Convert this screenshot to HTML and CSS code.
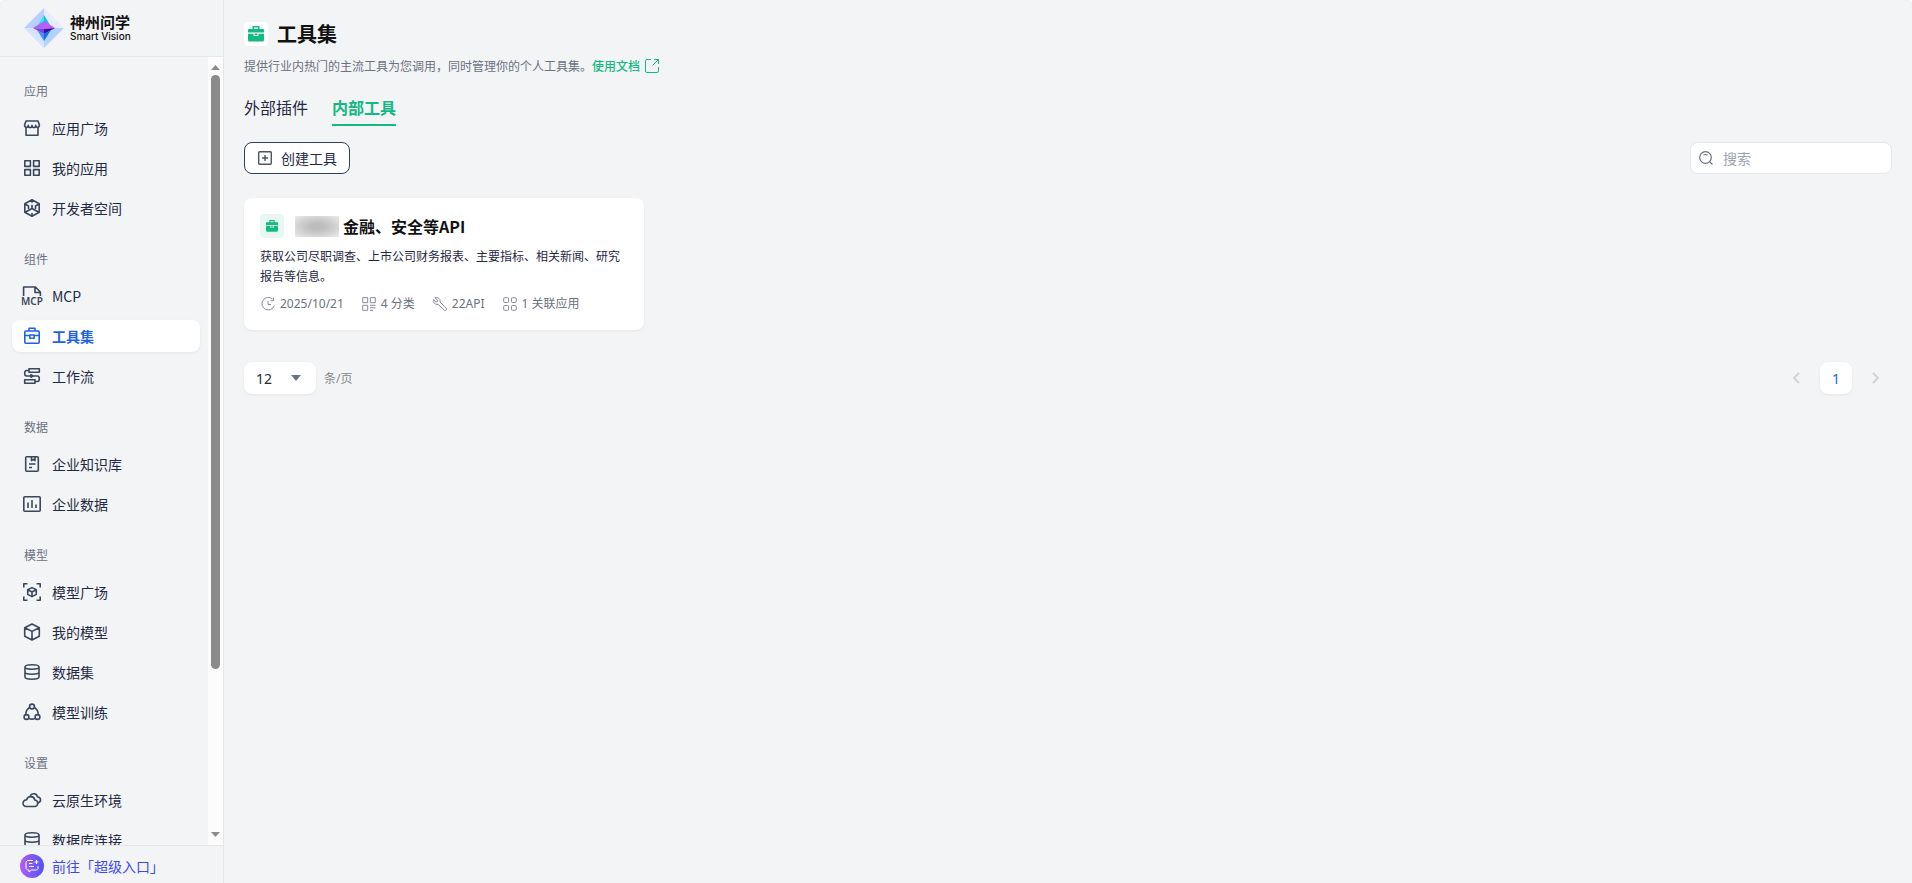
FILE: index.html
```html
<!DOCTYPE html>
<html lang="zh-CN">

<head>
    <meta charset="UTF-8">
    <meta name="viewport" content="width=device-width, initial-scale=1.0">
    <title>工具集</title>
    <link rel="stylesheet" href="styles.css">
</head>

<body>

    <div class="layout">
        <aside class="sidebar">
            <header class="brand">
                <svg class="brand-logo" viewBox="0 0 40 40">
                    <path d="M20 0L40 20H20z" fill="#e6edff" />
                    <path d="M20 0L0 20h20z" fill="#b9cfff" />
                    <path d="M0 20l20 20V20z" fill="#d5e4ff" />
                    <path d="M40 20L20 40V20z" fill="#b4d2ff" />
                    <path d="M20 7l-6 10 6-3z" fill="#35e6f5" />
                    <path d="M20 7l6 10-6-3z" fill="#18b9f2" />
                    <path d="M9 20l11-7v8z" fill="#a766f5" />
                    <path d="M31 20l-11-7v8z" fill="#c15cf4" />
                    <path d="M9 20l11 1v5z" fill="#7b3fe4" />
                    <path d="M31 20l-11 1v5z" fill="#35149c" />
                    <path d="M13 22l7 11v-7z" fill="#4b8dfa" />
                    <path d="M27 22l-7 11v-7z" fill="#0a71ea" />
                </svg>
                <div class="brand-text">
                    <strong>神州问学</strong>
                    <span>Smart Vision</span>
                </div>
            </header>

            <div class="sidebar-body">
                <nav class="menu">
                    <section>
                        <h2>应用</h2>
                        <a href="#">
                            <svg viewBox="0 0 20 20"><path d="M4 9v8.200h12V9M4 3h12l1.400 4c0 3-3.600 3-3.700.4 0 2.800-3.700 2.800-3.700 0 0 2.800-3.700 2.800-3.700 0C6.200 10 2.600 10 2.600 7z" /></svg>
                            应用广场
                        </a>
                        <a href="#">
                            <svg viewBox="0 0 20 20"><path d="M2.800 2.800h5.600v5.600H2.800zM11.600 2.800h5.600v5.600h-5.600zM2.800 11.600h5.600v5.600H2.800zM11.600 11.600h5.600v5.600h-5.600z" /></svg>
                            我的应用
                        </a>
                        <a href="#">
                            <svg viewBox="0 0 20 20"><path d="M10 1.800l7.200 4v8.400l-7.200 4-7.200-4V5.800zM10 2v2.800M10 10.500V6.800M10 10.500l-6.800 3.800M10 10.500l6.800 3.800M10 18v-3M3 6l3.500 2v3M17 6l-3.500 2v3" /></svg>
                            开发者空间
                        </a>
                    </section>
                    <section>
                        <h2>组件</h2>
                        <a href="#">
                            <svg class="mcp-icon" viewBox="0 0 22 20">
                                <path d="M2.600 10V1h11.800l5 5v4M14 1v5.500h5.500" />
                                <text x="11" y="19" text-anchor="middle">MCP</text>
                            </svg>
                            <span class="latin">MCP</span>
                        </a>
                        <a href="#" class="active">
                            <svg viewBox="0 0 20 20"><rect x="2.800" y="5" width="14.400" height="12.200" rx="1" /><path d="M7 5V2.300h6V5M2.700 9.500h5.100M12.200 9.500h5.100M7.800 9v3.200h4.400V9z" /></svg>
                            工具集
                        </a>
                        <a href="#">
                            <svg viewBox="0 0 20 20"><path d="M7 2.700h10.300v3.600H7zM2.700 13.700H13v3.600H2.700zM7 4.500H4.500c-2.400 0-2.400 5.500 0 5.500h11c2.400 0 2.400 5.500 0 5.500H13M9 8.700v2.600l2-1.300z" /></svg>
                            工作流
                        </a>
                    </section>
                    <section>
                        <h2>数据</h2>
                        <a href="#">
                            <svg viewBox="0 0 20 20"><rect x="3.700" y="2.700" width="12.600" height="14.600" rx="1" /><path d="M9.500 3v3.600l1.800-1.200L13 6.600V3M7 10h6.500M7 13.500h3" /></svg>
                            企业知识库
                        </a>
                        <a href="#">
                            <svg viewBox="0 0 20 20"><rect x="1.800" y="2.800" width="16.400" height="14.400" rx="1" /><path d="M6 8.500V14M10 6v8M14 10.500V14" /></svg>
                            企业数据
                        </a>
                    </section>
                    <section>
                        <h2>模型</h2>
                        <a href="#">
                            <svg viewBox="0 0 20 20"><path d="M1.800 5.500V1.800h3.700M14.500 1.800h3.700v3.700M18.200 14.500v3.700h-3.700M5.500 18.200H1.800v-3.700M10 5.600l4.300 2.200v4.600L10 14.600l-4.300-2.200V7.800zM5.700 7.800L10 10l4.300-2.200M10 10v4.600" /></svg>
                            模型广场
                        </a>
                        <a href="#">
                            <svg viewBox="0 0 20 20"><path d="M10 2l7.300 3.700v8.600L10 18l-7.300-3.700V5.700zM2.700 5.700L10 9.400l7.300-3.700M10 9.400V18" /></svg>
                            我的模型
                        </a>
                        <a href="#">
                            <svg viewBox="0 0 20 20"><path d="M3 5c0-3 14-3 14 0s-14 3-14 0v10c0 3 14 3 14 0V5M3 10c0 3 14 3 14 0" /></svg>
                            数据集
                        </a>
                        <a href="#">
                            <svg viewBox="0 0 20 20"><circle cx="10" cy="4.500" r="2.400" /><circle cx="4.500" cy="15" r="2.400" /><circle cx="15.500" cy="15" r="2.400" /><path d="M7.600 5.500C5 7 3.800 9.500 3.800 12.500M12.400 5.500c2.600 1.500 3.800 4 3.800 7M7 16.500c2 .8 4 .8 6 0" /></svg>
                            模型训练
                        </a>
                    </section>
                    <section>
                        <h2>设置</h2>
                        <a href="#">
                            <svg viewBox="0 0 20 20"><path d="M4.500 16.500C-.5 16.500.200 10 4.600 9.700 6 5.500 12 5.700 12.800 10c4.400.7 3.500 6.500-.3 6.500zM8 6.500c1.500-4 7-3.500 7.300.3 4.500.7 4.200 5.700 0 6.200" /></svg>
                            云原生环境
                        </a>
                        <a href="#">
                            <svg viewBox="0 0 20 20"><path d="M3 5c0-3 14-3 14 0s-14 3-14 0v10c0 3 14 3 14 0V5M3 10c0 3 14 3 14 0" /></svg>
                            数据库连接
                        </a>
                    </section>
                </nav>
                <div class="scrollbar">
                    <svg viewBox="0 0 9 5"><path d="M0 5l4.500-5L9 5z" /></svg>
                    <div class="scroll-track"><div class="scroll-thumb"></div></div>
                    <svg viewBox="0 0 9 5"><path d="M0 0h9L4.500 5z" /></svg>
                </div>
            </div>

            <a class="super-entry" href="#">
                <span class="super-icon">
                    <svg viewBox="0 0 14 14"><path d="M8 1.500H2.500L1 3v6.500L2.500 11H4v2l2.500-2h5L13 9.500V7M4 4.500h3.500M4 7.500h5M11.500 1v4M9.500 3h4" /></svg>
                </span>
                前往「超级入口」
            </a>
        </aside>

        <main class="content">
            <div class="page-title">
                <span class="title-icon">
                    <svg viewBox="0 0 16 16"><path d="M4.500 3V0h7v3H15q1 0 1 1v2.500H0V4q0-1 1-1zM6 1.500V3h4V1.500zM0 7.700h5.500V10h5V7.700H16V14q0 1.500-1.500 1.500h-13Q0 15.500 0 14zM6.500 7.500h3V9h-3z" /></svg>
                </span>
                <h1>工具集</h1>
            </div>
            <p class="page-desc">
                提供行业内热门的主流工具为您调用，同时管理你的个人工具集。<a href="#">使用文档<svg viewBox="0 0 14 14"><path d="M6 .5H2Q.5.5.5 2v10q0 1.500 1.500 1.500h10q1.500 0 1.500-1.500V8M9 .5h4.500V5M13.500.500L7.500 6.500" /></svg></a>
            </p>

            <div class="tabs">
                <a href="#">外部插件</a>
                <a href="#" class="active">内部工具</a>
            </div>

            <div class="toolbar">
                <button class="create-btn" type="button">
                    <svg viewBox="0 0 14 14"><rect x=".7" y=".7" width="12.600" height="12.600" rx="1" /><path d="M7 4v6M4 7h6" /></svg>
                    创建工具
                </button>
                <label class="search">
                    <svg viewBox="0 0 14 14"><circle cx="6.500" cy="6.500" r="5.800" /><path d="M10.800 10.800l2.700 2.700M4.500 4q2-1 4 0" /></svg>
                    <input type="text" placeholder="搜索" aria-label="搜索">
                </label>
            </div>

            <div class="card-list">
                <article class="card">
                    <div class="card-head">
                        <span class="card-icon">
                            <svg viewBox="0 0 16 16"><path d="M4.500 3V0h7v3H15q1 0 1 1v2.500H0V4q0-1 1-1zM6 1.500V3h4V1.500zM0 7.700h5.500V10h5V7.700H16V14q0 1.500-1.500 1.500h-13Q0 15.500 0 14zM6.500 7.500h3V9h-3z" /></svg>
                        </span>
                        <span class="masked"></span>
                        <h3>金融、安全等API</h3>
                    </div>
                    <p>获取公司尽职调查、上市公司财务报表、主要指标、相关新闻、研究报告等信息。</p>
                    <div class="card-meta">
                        <span>
                            <svg viewBox="0 0 14 14"><path d="M11.500 2A6.300 6.300 0 1 0 13.300 8.500M12.500 .5v3.200H9.500M7 4v3.500h3" /></svg>
                            2025/10/21
                        </span>
                        <span>
                            <svg viewBox="0 0 14 14"><path d="M.700.700h5v5h-5zM8.300.700h5v5h-5zM.700 8.300h5v5h-5zM8 8.300h5.500M8 10.800h5.500M8 13.300h3" /></svg>
                            4 分类
                        </span>
                        <span>
                            <svg viewBox="0 0 14 14"><path d="M2 .7l2.500 2.500-.3 1.600-1.500.2L.500 2.500C-.2 5.500 2 8 5 7.200l6.300 6.100q1.200.5 1.900-.4.700-1-.1-1.900L7 5C7.800 2 5 0 2 .7z" /></svg>
                            22API
                        </span>
                        <span>
                            <svg viewBox="0 0 14 14"><rect x=".7" y=".7" width="4.800" height="4.800" rx="1" /><rect x="8.500" y=".7" width="4.800" height="4.800" rx="1" /><rect x=".7" y="8.500" width="4.800" height="4.800" rx="1" /><rect x="8.500" y="8.500" width="4.800" height="4.800" rx="1" /></svg>
                            1 关联应用
                        </span>
                    </div>
                </article>
            </div>

            <div class="pagination">
                <div class="page-size">
                    <div class="select-box">
                        <select id="pageSize">
                            <option>12</option>
                            <option>24</option>
                            <option>48</option>
                        </select>
                        <svg viewBox="0 0 10 6"><path d="M0 0h10L5 6z" /></svg>
                    </div>
                    <label for="pageSize">条/页</label>
                </div>
                <div class="pages">
                    <button type="button" aria-label="上一页" disabled><svg viewBox="0 0 8 12"><path d="M7 1L2 6l5 5" /></svg></button>
                    <button type="button" class="current">1</button>
                    <button type="button" aria-label="下一页" disabled><svg viewBox="0 0 8 12"><path d="M1 1l5 5-5 5" /></svg></button>
                </div>
            </div>
        </main>
    </div>

</body>

</html>
```
FILE: styles.css
```css
* {
    margin: 0;
    padding: 0;
    box-sizing: border-box;
}

body {
    font-family: "Noto Sans", "Noto Sans CJK SC", sans-serif;
    font-size: 14px;
    color: #1f2a44;
    background-color: #fafafa;
}

a {
    color: inherit;
    text-decoration: none;
}

svg {
    flex: none;
    fill: none;
    stroke: currentColor;
    stroke-linejoin: round;
}

button,
input,
select {
    font: inherit;
    color: inherit;
    border: none;
    outline: none;
}

.layout {
    display: flex;
    height: 100vh;
    border-radius: 8px 8px 0 0;
    background-color: #f3f4f6;
    box-shadow: 0 0 2px rgba(0, 0, 0, 0.15);
}

/* sidebar */
.sidebar {
    display: flex;
    flex-direction: column;
    width: 224px;
    flex: none;
    border-right: 1px solid #e5e7eb;
}

.brand {
    display: flex;
    align-items: center;
    gap: 6px;
    height: 57px;
    padding-left: 24px;
    border-bottom: 1px solid #e5e7eb;
}

.brand-logo {
    width: 40px;
    height: 40px;
    stroke: none;
}

.brand-text {
    display: flex;
    flex-direction: column;
    color: #111;
}

.brand-text strong {
    font-size: 15px;
    line-height: 16px;
}

.brand-text span {
    font-family: Inter, sans-serif;
    font-size: 10px;
    font-weight: 500;
    line-height: 12px;
}

.sidebar-body {
    display: flex;
    flex: 1;
    min-height: 0;
}

.menu {
    flex: 1;
    overflow: hidden;
    padding: 26px 8px 0 12px;
}

.menu section {
    margin-bottom: 27px;
}

.menu h2 {
    padding-left: 12px;
    margin-bottom: 11px;
    font-size: 12px;
    font-weight: 400;
    line-height: 18px;
    color: #6b7280;
}

.menu a {
    display: flex;
    align-items: center;
    gap: 10px;
    height: 32px;
    padding-left: 10px;
    border-radius: 8px;
}

.menu a + a {
    margin-top: 8px;
}

.menu svg {
    width: 20px;
    height: 20px;
    color: #3b475c;
    stroke-width: 1.6;
}

.menu .mcp-icon {
    width: 22px;
    margin: 0 -1px;
    overflow: visible;
}

.mcp-icon text {
    font-size: 10px;
    font-weight: 600;
    fill: currentColor;
    stroke: none;
}

.latin {
    font-family: "Noto Sans CJK SC", sans-serif;
}

.menu .active {
    background-color: #fff;
    color: #1f63dd;
    font-weight: 700;
    box-shadow: 0 1px 3px rgba(0, 0, 0, 0.06);
}

.menu .active svg {
    color: #1f63dd;
}

.scrollbar {
    display: flex;
    flex-direction: column;
    align-items: center;
    width: 15px;
    padding: 8px 0;
    background-color: #fcfcfc;
}

.scrollbar svg {
    width: 9px;
    height: 5px;
    fill: #8b8b8b;
    stroke: none;
}

.scroll-track {
    flex: 1;
    padding: 5px 0;
}

.scroll-thumb {
    width: 9px;
    height: 79%;
    border-radius: 5px;
    background-color: #8b8b8b;
}

.super-entry {
    display: flex;
    align-items: center;
    gap: 8px;
    height: 38px;
    padding: 2px 0 0 20px;
    border-top: 1px solid #e5e7eb;
    color: #4048f0;
}

.super-icon {
    display: flex;
    align-items: center;
    justify-content: center;
    width: 24px;
    height: 24px;
    border-radius: 50%;
    background: linear-gradient(90deg, #b25cf6, #4f55f5);
    color: #fff;
}

.super-icon svg {
    width: 14px;
    height: 14px;
}

/* content */
.content {
    flex: 1;
    min-width: 0;
    padding: 20px;
}

.page-title {
    display: flex;
    align-items: center;
    gap: 9px;
    height: 28px;
}

.title-icon,
.card-icon {
    display: flex;
    align-items: center;
    justify-content: center;
    width: 24px;
    height: 24px;
    border-radius: 4px;
    background-color: #fff;
    color: #12b981;
}

.title-icon svg,
.card-icon svg {
    width: 16px;
    height: 16px;
    fill: currentColor;
    fill-rule: evenodd;
    stroke: none;
}

.page-title h1 {
    padding-top: 2px;
    font-size: 20px;
    line-height: 28px;
    color: #111;
}

.page-desc {
    display: flex;
    align-items: center;
    height: 20px;
    margin-top: 8px;
    font-size: 12px;
    color: #6b7280;
}

.page-desc a {
    display: flex;
    align-items: center;
    gap: 5px;
    color: #12b981;
    font-weight: 500;
}

.page-desc svg {
    width: 14px;
    height: 14px;
}

.tabs {
    display: flex;
    gap: 24px;
    margin-top: 18px;
}

.tabs a {
    height: 32px;
    font-size: 16px;
    line-height: 28px;
}

.tabs .active {
    color: #12b981;
    font-weight: 700;
    border-bottom: 2px solid #12b981;
}

.toolbar {
    display: flex;
    justify-content: space-between;
    margin-top: 16px;
}

.create-btn {
    display: flex;
    align-items: center;
    gap: 9px;
    height: 32px;
    padding: 0 12px 0 13px;
    border: 1px solid #334155;
    border-radius: 8px;
    background-color: #fff;
}

.create-btn svg {
    width: 14px;
    height: 14px;
    color: #4b5563;
    stroke-width: 1.4;
}

.search {
    display: flex;
    align-items: center;
    gap: 10px;
    width: 202px;
    height: 32px;
    padding: 0 8px;
    border: 1px solid #e5e7eb;
    border-radius: 8px;
    background-color: #fff;
}

.search svg {
    width: 14px;
    height: 14px;
    color: #6b7280;
    stroke-width: 1.2;
}

.search input {
    flex: 1;
    min-width: 0;
    background: none;
}

.search input::placeholder {
    color: #9ca3af;
}

.card-list {
    display: grid;
    grid-template-columns: repeat(auto-fill, 400px);
    gap: 16px;
    margin-top: 24px;
}

.card {
    padding: 16px;
    border-radius: 8px;
    background-color: #fff;
    box-shadow: 0 1px 3px rgba(0, 0, 0, 0.06);
}

.card-head {
    display: flex;
    align-items: center;
}

.card-icon {
    background-color: #e7f8f2;
}

.card-icon svg {
    width: 12px;
    height: 12px;
}

.masked {
    width: 44px;
    height: 21px;
    margin: 0 4px 0 11px;
    background: radial-gradient(ellipse at center, #bdbdbd 20%, #cfcfcf 55%, #ebebeb 100%);
}

.card h3 {
    font-family: "Noto Sans CJK SC", sans-serif;
    font-size: 16px;
    line-height: 24px;
    color: #111;
}

.card p {
    margin: 9px 0 7px;
    font-size: 12px;
    line-height: 20px;
}

.card-meta {
    display: flex;
    gap: 18px;
    padding-left: 1px;
    font-size: 12px;
    line-height: 20px;
    color: #6b7280;
}

.card-meta span {
    display: flex;
    align-items: center;
    gap: 5px;
}

.card-meta svg {
    width: 14px;
    height: 14px;
    color: #858b98;
}

.pagination {
    display: flex;
    justify-content: space-between;
    margin-top: 32px;
}

.page-size,
.pages {
    display: flex;
    align-items: center;
    gap: 8px;
}

.page-size label {
    font-size: 12px;
    color: #888;
}

.select-box {
    position: relative;
}

.select-box select {
    appearance: none;
    width: 72px;
    height: 32px;
    padding-left: 12px;
    border-radius: 8px;
    background-color: #fff;
    box-shadow: 0 1px 3px rgba(0, 0, 0, 0.06);
}

.select-box svg {
    position: absolute;
    top: 13px;
    right: 15px;
    width: 10px;
    height: 6px;
    fill: #6b7280;
    stroke: none;
    pointer-events: none;
}

.pages button {
    display: flex;
    align-items: center;
    justify-content: center;
    width: 32px;
    height: 32px;
    border-radius: 8px;
    background: none;
    color: #d1d3d8;
}

.pages .current {
    background-color: #fff;
    color: #1f63dd;
    box-shadow: 0 1px 3px rgba(0, 0, 0, 0.06);
}

.pages svg {
    width: 8px;
    height: 12px;
    stroke-width: 2;
}
```
